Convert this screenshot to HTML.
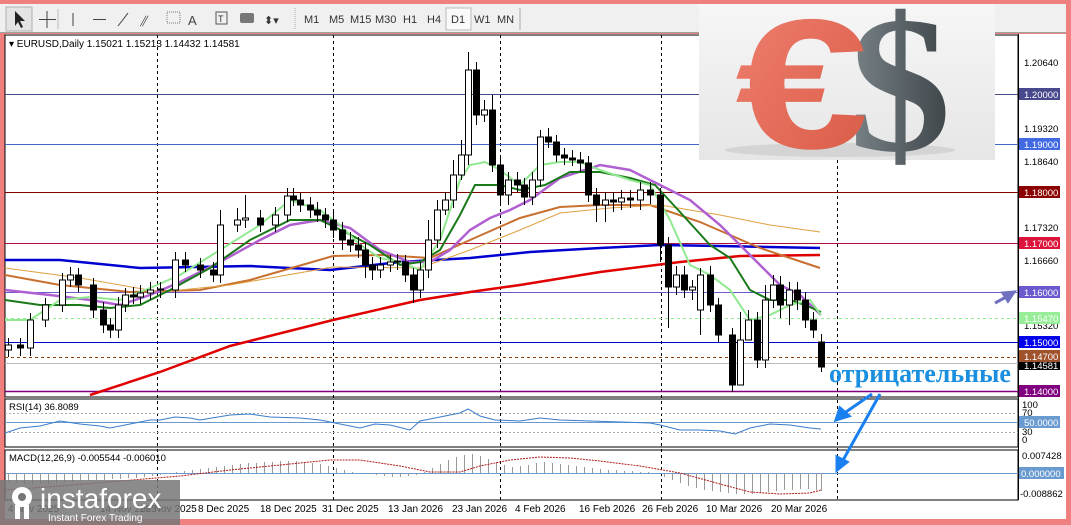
<!DOCTYPE html><html><head><meta charset="utf-8"><style>
html,body{margin:0;padding:0;width:1071px;height:525px;overflow:hidden;background:#f08080;font-family:"Liberation Sans",sans-serif}
#w{position:absolute;left:0;top:0;width:1071px;height:525px}
</style></head><body>
<svg id="w" width="1071" height="525" xmlns="http://www.w3.org/2000/svg" font-family="Liberation Sans, sans-serif">
<defs>
<linearGradient id="bg" x1="0" y1="0" x2="0" y2="1"><stop offset="0" stop-color="#f6f6f6"/><stop offset="1" stop-color="#e6e6e6"/></linearGradient>
<linearGradient id="eu" x1="0" y1="0" x2="1" y2="1"><stop offset="0" stop-color="#f08070"/><stop offset="1" stop-color="#d85a45"/></linearGradient>
<linearGradient id="us" x1="0" y1="0" x2="1" y2="0"><stop offset="0" stop-color="#7a8488"/><stop offset="1" stop-color="#3c4448"/></linearGradient>
</defs>
<rect x="0" y="0" width="1071" height="525" fill="#f08080"/>
<!-- toolbar -->
<rect x="0" y="4" width="1066" height="29" fill="#f0f0f0"/>
<line x1="0" y1="32.5" x2="1066" y2="32.5" stroke="#a0a0a0"/>
<rect x="6" y="7" width="26" height="24" fill="#e4e4e4" stroke="#b0b0b0"/>
<path d="M15 11 L15 26 L18 22 L21 28 L23 27 L20 21 L25 21 Z" fill="#222"/>
<path d="M47 11 V28 M39 19.5 H56" stroke="#444" stroke-width="1"/>
<line x1="58" y1="9" x2="58" y2="29" stroke="#bbb"/>
<line x1="73" y1="13" x2="73" y2="26" stroke="#444"/>
<line x1="93" y1="19.5" x2="106" y2="19.5" stroke="#444"/>
<line x1="118" y1="26" x2="128" y2="13" stroke="#444"/>
<text x="140" y="26" font-size="14" font-style="italic" fill="#444">⫽</text>
<rect x="167" y="12" width="13" height="11" fill="none" stroke="#777" stroke-dasharray="1 1"/>
<text x="188" y="25" font-size="13" fill="#444">A</text>
<rect x="216" y="12" width="11" height="12" fill="none" stroke="#555"/><text x="218" y="22" font-size="9" fill="#333">T</text>
<rect x="240" y="13" width="14" height="10" rx="2" fill="#777"/>
<text x="264" y="24" font-size="11" fill="#333">⬍▾</text>
<line x1="295" y1="8" x2="295" y2="30" stroke="#aaa" stroke-dasharray="1 1"/>
<g font-size="11" fill="#333">
<text x="304" y="23">M1</text><text x="329" y="23">M5</text><text x="350" y="23">M15</text><text x="375" y="23">M30</text><text x="403" y="23">H1</text><text x="427" y="23">H4</text>
<rect x="446" y="8" width="25" height="22" fill="#fafafa" stroke="#bbb"/><text x="451" y="23">D1</text>
<text x="474" y="23">W1</text><text x="497" y="23">MN</text></g>
<line x1="520" y1="8" x2="520" y2="30" stroke="#aaa"/>
<!-- panels -->
<rect x="5" y="34" width="1061" height="485" fill="#fff"/>
<rect x="5" y="35" width="1013" height="362" fill="none" stroke="#000"/>
<rect x="5" y="399" width="1013" height="48" fill="none" stroke="#000"/>
<rect x="5" y="450" width="1013" height="50" fill="none" stroke="#000"/>
<path d="M157.5 35V500M333.5 35V500M500.5 35V500M661.5 35V500M837.5 160V500" stroke="#000" stroke-dasharray="3 3"/>
<!-- horizontal levels -->
<g stroke-width="1">
<line x1="5" y1="94.5" x2="1018" y2="94.5" stroke="#48488c"/>
<line x1="5" y1="144.5" x2="1018" y2="144.5" stroke="#4169c8"/>
<line x1="5" y1="192.5" x2="1018" y2="192.5" stroke="#800000"/>
<line x1="5" y1="243.5" x2="1018" y2="243.5" stroke="#b0103c"/>
<line x1="5" y1="292.5" x2="1018" y2="292.5" stroke="#6a5acd"/>
<line x1="5" y1="318.5" x2="1018" y2="318.5" stroke="#90ee90" stroke-dasharray="3 3"/>
<line x1="5" y1="342.5" x2="1018" y2="342.5" stroke="#0000cc"/>
<line x1="5" y1="357.5" x2="1018" y2="357.5" stroke="#8b4513" stroke-dasharray="3 3"/>
<line x1="5" y1="363.5" x2="1018" y2="363.5" stroke="#bbb"/>
<line x1="5" y1="391.5" x2="1018" y2="391.5" stroke="#800080" stroke-width="1.5"/>
</g>
<polyline fill="none" stroke="#0000d0" stroke-width="2.5" points="5,260 60,260 140,268 250,266 330,270 400,262 470,258 530,252 600,248 660,245 720,246 820,248"/>
<polyline fill="none" stroke="#e00000" stroke-width="2.5" points="90,395 160,372 230,346 333,320 420,300 470,292 520,285 600,272 680,262 740,256 820,255"/>
<polyline fill="none" stroke="#c87030" stroke-width="2" points="5,275 60,285 130,292 200,290 250,280 333,256 380,255 430,258 470,240 520,218 560,207 600,205 650,205 700,222 760,248 790,258 820,268"/>
<polyline fill="none" stroke="#e0a040" stroke-width="1" points="5,268 80,278 160,292 230,285 333,267 420,268 470,250 520,230 560,213 610,208 660,205 720,215 770,225 820,232"/>
<polyline fill="none" stroke="#b060d0" stroke-width="2.5" points="5,290 50,295 90,300 120,305 150,295 180,282 220,262 260,240 290,225 320,220 350,228 380,250 410,262 430,262 450,250 470,230 490,218 510,210 530,200 560,178 600,165 630,170 660,185 690,200 720,225 750,255 780,285 800,295 821,315"/>
<polyline fill="none" stroke="#1a7a1a" stroke-width="2" points="5,300 40,305 80,305 110,308 140,305 170,290 210,268 250,240 290,220 320,220 345,232 370,245 400,265 420,262 440,250 460,215 475,185 500,185 520,190 545,185 570,172 600,172 630,178 655,185 680,212 710,245 730,258 750,290 770,300 790,300 805,305 821,312"/>
<polyline fill="none" stroke="#90e890" stroke-width="2" points="5,320 30,320 60,300 90,297 120,300 150,288 180,275 220,250 260,225 290,200 320,210 340,225 360,245 380,258 400,262 420,270 440,240 460,180 470,165 485,162 500,170 520,185 540,165 560,162 580,162 600,170 630,180 650,185 670,220 690,265 710,275 730,290 750,320 770,315 790,305 810,300 821,315"/>
<!-- candles -->
<g shape-rendering="crispEdges">
<path stroke="#000" d="M8.5 338V357M20.5 338V356M30.5 313V356M45.5 298V327M62.5 273V312M70.5 267V287M78.5 268V292M93.5 278V318M103.5 302V333M110.5 318V338M118.5 297V338M125.5 288V312M133.5 287V304M140.5 285V304M150.5 282V300M160.5 282V298M175.5 252V298M185.5 252V272M200.5 258V278M213.5 262V282M220.5 210V283M237.5 208V232M245.5 195V228M260.5 210V232M275.5 207V232M287.5 188V222M293.5 188V206M300.5 193V212M310.5 197V218M317.5 202V222M325.5 208V228M333.5 212V238M342.5 222V250M350.5 232V252M358.5 237V258M365.5 242V278M372.5 257V280M380.5 257V278M390.5 255V272M397.5 254V270M405.5 255V282M413.5 268V303M420.5 262V298M428.5 220V278M437.5 200V248M445.5 192V215M453.5 160V208M461.5 140V180M468.5 52V165M476.5 62V125M484.5 100V122M492.5 95V172M500.5 158V205M508.5 172V205M517.5 172V192M524.5 178V205M532.5 172V205M540.5 130V187M548.5 128V148M556.5 135V162M564.5 148V165M572.5 150V166M580.5 152V172M588.5 156V202M596.5 188V222M605.5 192V222M613.5 192V212M621.5 190V210M630.5 190V208M640.5 182V210M650.5 182V204M660.5 188V262M668.5 237V328M676.5 266V295M684.5 266V298M692.5 280V300M700.5 268V335M710.5 266V312M718.5 298V342M732.5 328V392M740.5 312V385M748.5 310V330M757.5 312V368M765.5 285V368M773.5 275V308M780.5 276V318M789.5 282V325M797.5 282V310M805.5 292V328M813.5 312V338M821.5 334V372"/>
<path fill="#fff" stroke="#000" d="M5.5 345h6v5h-6zM27.5 320h6v28h-6zM42.5 305h6v15h-6zM59.5 280h6v25h-6zM67.5 275h6v5h-6zM115.5 305h6v25h-6zM122.5 295h6v10h-6zM137.5 293h6v4h-6zM147.5 290h6v3h-6zM157.5 289h6v1h-6zM172.5 260h6v30h-6zM217.5 225h6v50h-6zM234.5 220h6v5h-6zM242.5 218h6v2h-6zM272.5 215h6v10h-6zM284.5 196h6v19h-6zM377.5 265h6v5h-6zM387.5 262h6v3h-6zM394.5 261h6v1h-6zM417.5 270h6v20h-6zM425.5 240h6v30h-6zM434.5 210h6v30h-6zM442.5 200h6v10h-6zM450.5 175h6v25h-6zM458.5 155h6v20h-6zM465.5 70h6v85h-6zM481.5 110h6v5h-6zM505.5 180h6v15h-6zM529.5 180h6v17h-6zM537.5 137h6v43h-6zM602.5 200h6v5h-6zM618.5 198h6v4h-6zM637.5 190h6v10h-6zM673.5 275h6v12h-6zM689.5 287h6v3h-6zM697.5 275h6v35h-6zM737.5 340h6v45h-6zM745.5 320h6v20h-6zM762.5 300h6v60h-6zM770.5 285h6v15h-6zM786.5 290h6v15h-6z"/>
<path fill="#000" stroke="#000" d="M17.5 345h6v3h-6zM75.5 275h6v10h-6zM90.5 285h6v25h-6zM100.5 310h6v15h-6zM107.5 325h6v5h-6zM130.5 295h6v2h-6zM182.5 260h6v5h-6zM197.5 265h6v5h-6zM210.5 270h6v5h-6zM257.5 218h6v7h-6zM290.5 196h6v4h-6zM297.5 200h6v5h-6zM307.5 205h6v5h-6zM314.5 210h6v5h-6zM322.5 215h6v5h-6zM330.5 220h6v10h-6zM339.5 230h6v10h-6zM347.5 240h6v5h-6zM355.5 245h6v5h-6zM362.5 250h6v15h-6zM369.5 265h6v5h-6zM402.5 262h6v13h-6zM410.5 275h6v15h-6zM473.5 70h6v45h-6zM489.5 110h6v55h-6zM497.5 165h6v30h-6zM514.5 180h6v5h-6zM521.5 185h6v12h-6zM545.5 137h6v5h-6zM553.5 142h6v13h-6zM561.5 155h6v3h-6zM569.5 158h6v2h-6zM577.5 160h6v3h-6zM585.5 163h6v32h-6zM593.5 195h6v10h-6zM610.5 200h6v2h-6zM627.5 198h6v2h-6zM647.5 190h6v5h-6zM657.5 195h6v50h-6zM665.5 245h6v42h-6zM681.5 275h6v15h-6zM707.5 275h6v30h-6zM715.5 305h6v30h-6zM729.5 335h6v50h-6zM754.5 320h6v40h-6zM777.5 285h6v20h-6zM794.5 290h6v10h-6zM802.5 300h6v20h-6zM810.5 320h6v10h-6zM818.5 342h6v25h-6z"/>
</g>
<text x="9" y="47" font-size="10" fill="#000">▾ EURUSD,Daily  1.15021 1.15213 1.14432 1.14581</text>
<!-- RSI -->
<line x1="5" y1="413.5" x2="1018" y2="413.5" stroke="#aaa" stroke-dasharray="2 2"/>
<line x1="5" y1="422.5" x2="1018" y2="422.5" stroke="#6a9bd0"/>
<line x1="5" y1="432.5" x2="1018" y2="432.5" stroke="#aaa" stroke-dasharray="2 2"/>
<polyline fill="none" stroke="#3a7cc8" stroke-width="1" points="5,433 20,428 40,426 60,421 80,424 100,426 110,428 130,424 150,420 160,420 175,417 190,418 200,420 230,415 250,414 270,417 300,418 320,420 340,424 360,428 375,424 390,425 410,430 420,421 435,418 460,413 468,409 480,416 495,420 520,421 540,418 560,420 590,421 620,422 650,423 660,425 680,430 700,430 720,431 735,434 750,428 770,424 790,425 810,428 821,429"/>
<text x="9" y="410" font-size="9.5">RSI(14) 36.8089</text>
<!-- MACD -->
<line x1="5" y1="473.5" x2="1018" y2="473.5" stroke="#6a9bd0"/>
<path stroke="#999" d="M8.5 473V482M16.5 473V483M24.5 473V484M32.5 473V484M40.5 473V484M48.5 473V484M56.5 473V483M64.5 473V482M72.5 473V482M80.5 473V481M88.5 473V481M96.5 473V480M104.5 473V480M112.5 473V479M120.5 473V479M128.5 473V478M136.5 473V478M144.5 473V477M152.5 473V476M160.5 473V475M168.5 473V474M176.5 473V472M184.5 473V471M192.5 473V470M200.5 473V469M208.5 473V468M216.5 473V467M224.5 473V466M232.5 473V465M240.5 473V464M248.5 473V463M256.5 473V463M264.5 473V462M272.5 473V462M280.5 473V461M288.5 473V461M296.5 473V461M304.5 473V462M312.5 473V463M320.5 473V464M328.5 473V466M336.5 473V468M344.5 473V470M352.5 473V472M368.5 473V474M376.5 473V475M384.5 473V476M392.5 473V477M400.5 473V477M408.5 473V476M416.5 473V475M424.5 473V472M432.5 473V468M440.5 473V464M448.5 473V460M456.5 473V457M464.5 473V455M472.5 473V454M480.5 473V456M488.5 473V459M496.5 473V462M504.5 473V465M512.5 473V467M520.5 473V466M528.5 473V465M536.5 473V463M544.5 473V462M552.5 473V463M560.5 473V464M568.5 473V465M576.5 473V466M584.5 473V467M592.5 473V468M600.5 473V469M608.5 473V470M616.5 473V470M624.5 473V471M632.5 473V471M640.5 473V472M648.5 473V472M664.5 473V477M672.5 473V480M680.5 473V483M688.5 473V486M696.5 473V488M704.5 473V490M712.5 473V491M720.5 473V492M728.5 473V493M736.5 473V494M744.5 473V494M752.5 473V494M760.5 473V493M768.5 473V492M776.5 473V491M784.5 473V490M792.5 473V490M800.5 473V489M808.5 473V489M816.5 473V490M821.5 473V491"/>
<polyline fill="none" stroke="#b01818" stroke-width="1" stroke-dasharray="2 1" points="5,490 60,486 120,481 180,476 230,470 280,465 330,460 360,460 400,466 430,472 460,472 480,466 510,460 540,457 570,458 600,461 640,466 680,473 720,484 750,492 780,494 810,493 821,490"/>
<text x="9" y="461" font-size="9.5">MACD(12,26,9) -0.005544 -0.006010</text>
<!-- axis labels -->
<rect x="1019" y="34" width="47" height="485" fill="#fff"/>
<line x1="1018.5" y1="34" x2="1018.5" y2="500" stroke="#000"/>
<g font-size="9.5" fill="#000">
<text x="1024" y="66">1.20640</text>
<rect x="1019" y="88" width="41" height="12" fill="#48488c"/><text x="1024" y="98" fill="#fff">1.20000</text>
<text x="1024" y="132">1.19320</text>
<rect x="1019" y="138" width="41" height="12" fill="#4169e1"/><text x="1024" y="148" fill="#fff">1.19000</text>
<text x="1024" y="165">1.18640</text>
<rect x="1019" y="186" width="41" height="12" fill="#8b0000"/><text x="1024" y="196" fill="#fff">1.18000</text>
<text x="1024" y="231">1.17320</text>
<rect x="1019" y="237" width="41" height="12" fill="#dc143c"/><text x="1024" y="247" fill="#fff">1.17000</text>
<text x="1024" y="264">1.16660</text>
<rect x="1019" y="286" width="41" height="12" fill="#6a5acd"/><text x="1024" y="296" fill="#fff">1.16000</text>
<text x="1024" y="329">1.15320</text>
<rect x="1019" y="312" width="41" height="12" fill="#98ee98"/><text x="1024" y="322" fill="#fff">1.15470</text>
<rect x="1019" y="336" width="41" height="12" fill="#0000ee"/><text x="1024" y="346" fill="#fff">1.15000</text>
<rect x="1019" y="360" width="41" height="10" fill="#000"/><text x="1024" y="369" fill="#fff">1.14581</text>
<rect x="1019" y="350" width="41" height="12" fill="#a0522d"/><text x="1024" y="360" fill="#fff">1.14700</text>
<rect x="1019" y="385" width="41" height="12" fill="#800080"/><text x="1024" y="395" fill="#fff">1.14000</text>
<text x="1022" y="408">100</text><text x="1022" y="416">70</text>
<rect x="1019" y="416" width="41" height="12" fill="#6a9bd0"/><text x="1024" y="426" fill="#fff">50.0000</text>
<text x="1022" y="435">30</text><text x="1022" y="443">0</text>
<text x="1022" y="459">0.007428</text>
<rect x="1019" y="467" width="45" height="12" fill="#6a9bd0"/><text x="1021" y="477" fill="#fff">0.000000</text>
<text x="1020" y="497">-0.008862</text>
</g>
<g font-size="10" fill="#000">
<text x="8" y="512">4 Nov 2025</text><text x="100" y="512">14 Nov 2025</text><text x="140" y="512">26 Nov 2025</text>
<text x="198" y="512">8 Dec 2025</text><text x="260" y="512">18 Dec 2025</text><text x="322" y="512">31 Dec 2025</text>
<text x="388" y="512">13 Jan 2026</text><text x="452" y="512">23 Jan 2026</text><text x="515" y="512">4 Feb 2026</text>
<text x="579" y="512">16 Feb 2026</text><text x="642" y="512">26 Feb 2026</text><text x="706" y="512">10 Mar 2026</text><text x="771" y="512">20 Mar 2026</text>
</g>
<!-- picture -->
<rect x="699" y="4" width="296" height="156" fill="url(#bg)"/>
<ellipse cx="840" cy="150" rx="115" ry="7" fill="#d4d4d4"/>
<text transform="translate(900,150) scale(1.05,1)" text-anchor="middle" font-family="Liberation Serif, serif" font-weight="bold" font-size="195" fill="url(#us)">$</text>
<text transform="translate(802,148) scale(1.3,1)" text-anchor="middle" font-family="Liberation Sans, sans-serif" font-weight="bold" font-size="185" fill="url(#eu)">€</text>
<!-- annotation -->
<text x="829" y="382" font-family="Liberation Serif, serif" font-weight="bold" font-size="26" fill="#1a8fe0">отрицательные</text>
<g stroke="#1a80f0" stroke-width="3" fill="#1a80f0">
<line x1="872" y1="394" x2="843" y2="414"/><path d="M836 420 L840 408 L849 416 Z"/>
<line x1="880" y1="394" x2="842" y2="462"/><path d="M837 470 L837 457 L847 462 Z"/>
</g>
<g stroke="#7070c0" stroke-width="3" fill="#7070c0"><line x1="995" y1="303" x2="1008" y2="296"/><path d="M1014 292 L1003 293 L1008 301 Z"/></g>
<!-- logo -->
<rect x="0" y="480" width="180" height="45" fill="#777" opacity="0.85"/>
<g fill="#fff"><circle cx="22" cy="497" r="10"/><circle cx="22" cy="497" r="4" fill="#777"/><rect x="15" y="505" width="5" height="14"/><rect x="24" y="505" width="5" height="14"/></g>
<text x="40" y="508" font-size="28" fill="#fff">instaforex</text>
<text x="48" y="521" font-size="10" fill="#fff">Instant Forex Trading</text>
</svg>
</body></html>
